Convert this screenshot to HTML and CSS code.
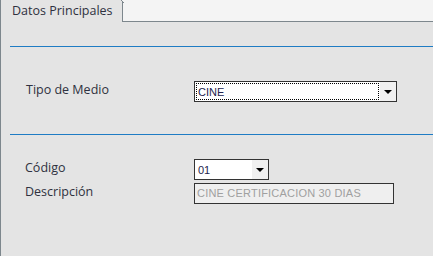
FILE: index.html
```html
<html lang="es">
<head>
    <meta charset="UTF-8">
    <title>Datos Principales</title>
    <link rel="stylesheet" href="styles.css">
</head>
<body>
    <div class="tabs">
        <div class="tab active">Datos Principales</div>
        <div class="tab-rest"></div>
    </div>

    <div class="panel">
        <div class="rule"></div>

        <div class="section first">
            <div class="row">
                <div class="label">Tipo de Medio</div>
                <div class="combo wide focused">
                    <div class="combo-text"><span>CINE</span></div>
                    <div class="combo-btn"><span class="arrow"></span></div>
                </div>
            </div>
        </div>

        <div class="rule"></div>

        <div class="section second">
            <div class="row">
                <div class="label">C&oacute;digo</div>
                <div class="combo small">
                    <div class="combo-text"><span>01</span></div>
                    <div class="combo-btn"><span class="arrow"></span></div>
                </div>
            </div>
            <div class="row">
                <div class="label">Descripci&oacute;n</div>
                <div class="field disabled">CINE CERTIFICACION 30 DIAS</div>
            </div>
        </div>
    </div>
</body>
</html>
```

FILE: styles.css
```css
html, body {
    margin: 0;
    padding: 0;
    height: 100%;
    background-color: #f4f4f4;
    font-family: "Open Sans", "Noto Sans", sans-serif;
    overflow: hidden;
}

.tabs {
    display: flex;
    height: 22px;
}

.tab {
    position: relative;
    width: 110px;
    height: 22px;
    padding-left: 11px;
    border-left: 1px solid #7d878d;
    border-right: 1px solid #7d878d;
    background-color: #e4e4e4;
    font-size: 12.5px;
    line-height: 21px;
    color: #2f3140;
}

/* slanted top-right corner of the tab */
.tab::after {
    content: "";
    position: absolute;
    top: -1px;
    right: -2px;
    width: 4px;
    height: 4px;
    background: linear-gradient(45deg, transparent 45%, #7d878d 45%, #7d878d 60%, #f4f4f4 60%);
}

.tab-rest {
    flex: 1;
    height: 21px;
    border-bottom: 1px solid #7d878d;
}

.panel {
    height: calc(100% - 22px);
    padding: 24px 0 0 9px;
    border-left: 1px solid #7d878d;
    background-color: #e4e4e4;
    box-sizing: border-box;
}

.rule {
    height: 1px;
    background-color: #1f7cc4;
}

.section.first {
    padding: 34px 0 32px 16px;
}

.section.second {
    padding: 24px 0 0 15px;
    display: flex;
    flex-direction: column;
    gap: 3px;
}

.row {
    display: flex;
    align-items: center;
    height: 21px;
}

.label {
    width: 169px;
    font-size: 12.5px;
    color: #2f3140;
    margin-top: -5px;
}

.first .label {
    width: 168px;
}

.combo {
    display: flex;
    height: 19px;
    border: 1px solid #333333;
    background-color: #ffffff;
}

.combo.wide {
    width: 201px;
}

.combo.small {
    width: 73px;
}

.combo-text {
    flex: 1;
    padding: 1px;
}

.combo-text span {
    display: block;
    height: 15px;
    padding-left: 1px;
    border: 1px solid transparent;
    font-family: "Liberation Sans", Arial, sans-serif;
    font-size: 11px;
    line-height: 17px;
    color: #23244e;
}

.focused .combo-text span {
    border: 1px dotted #000000;
}

.combo-btn {
    width: 16px;
    background-color: #f0f0f0;
    display: flex;
    align-items: center;
    justify-content: center;
}

.arrow {
    width: 0;
    height: 0;
    border-left: 4px solid transparent;
    border-right: 4px solid transparent;
    border-top: 4px solid #000000;
    margin-top: 1px;
}

.field {
    width: 196px;
    height: 19px;
    padding-left: 2px;
    border: 1px solid #333333;
    font-family: "Liberation Sans", Arial, sans-serif;
    font-size: 11px;
    line-height: 19px;
    letter-spacing: 0.2px;
}

.field.disabled {
    background-color: #efefef;
    color: #a0a0a0;
}
```
